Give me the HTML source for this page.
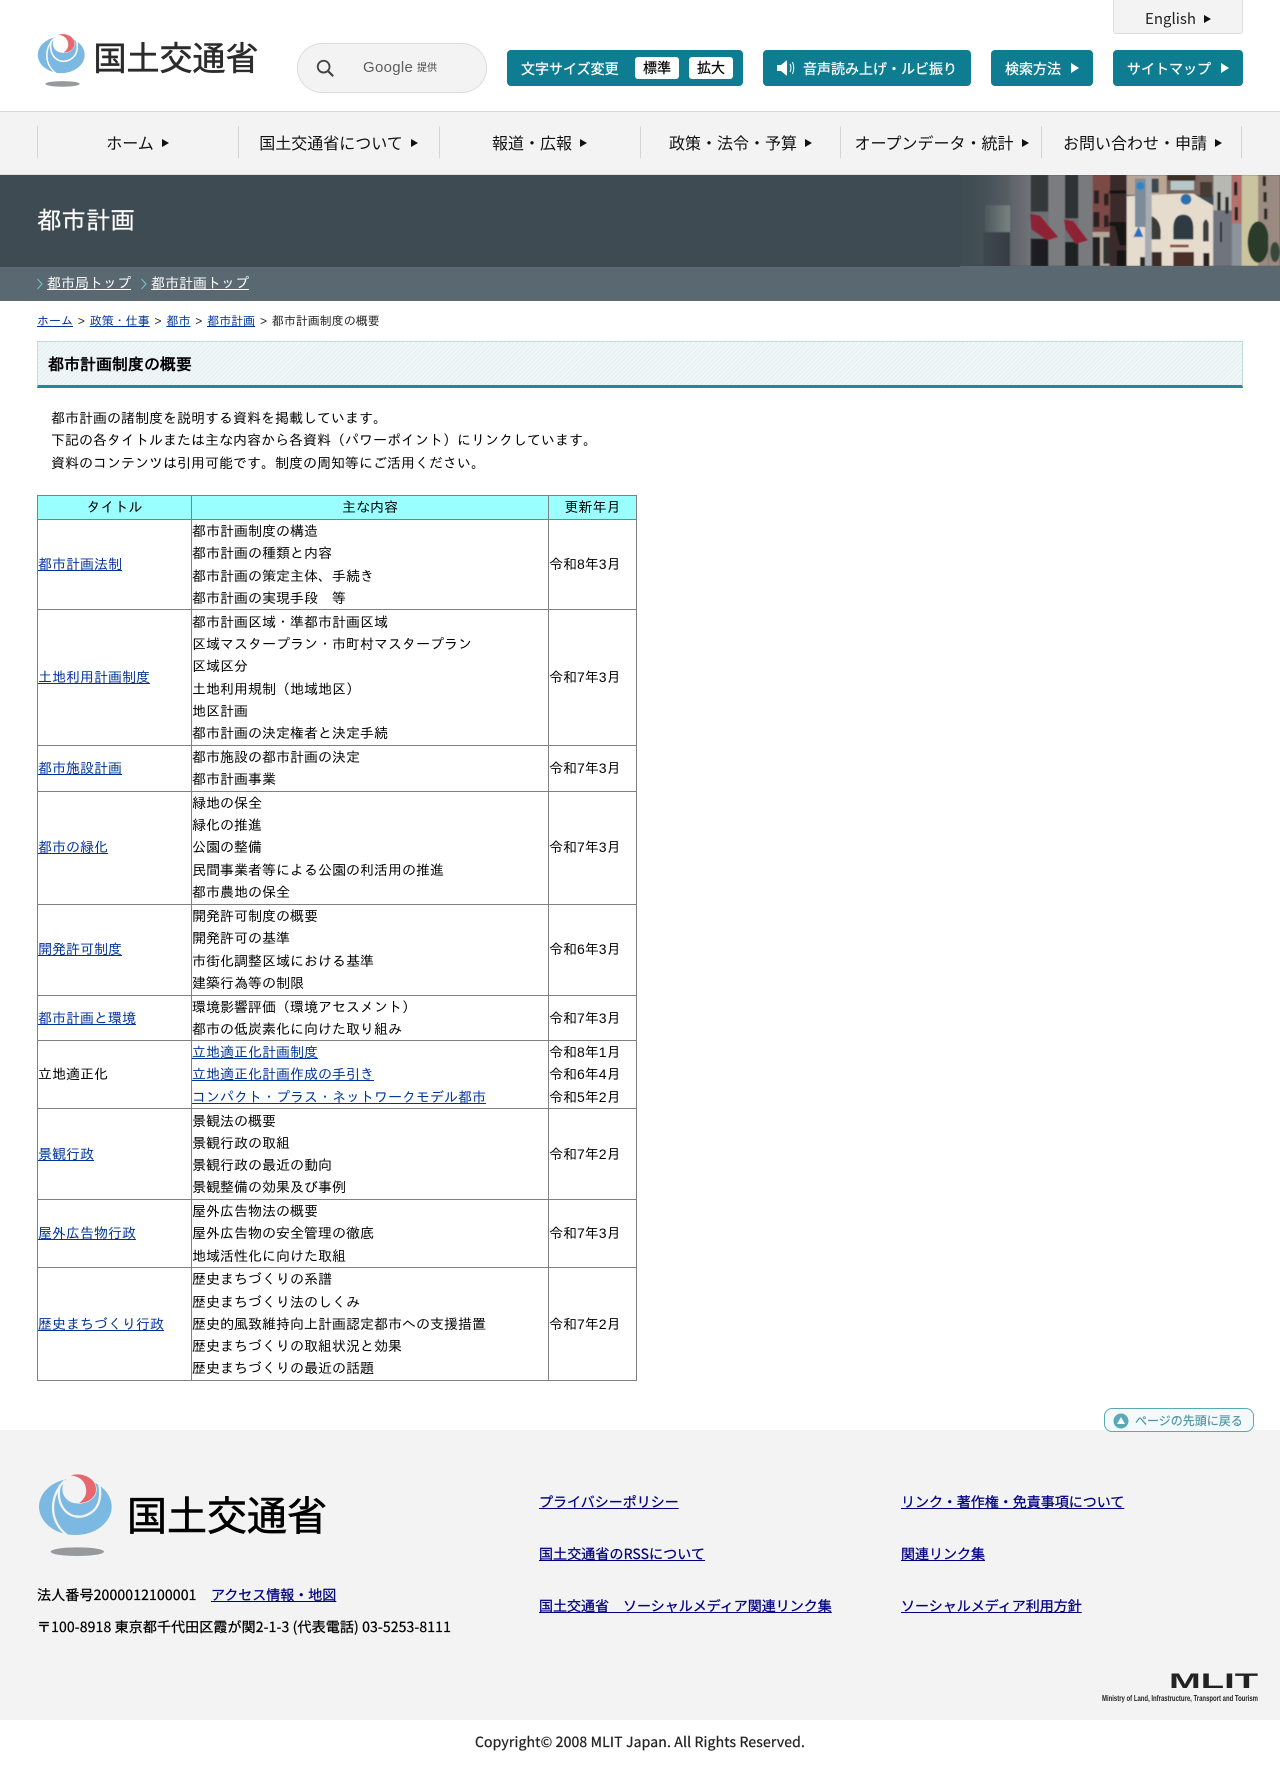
<!DOCTYPE html>
<html lang="ja"><head><meta charset="utf-8"><title>都市計画制度の概要</title>
<style>
*{box-sizing:border-box}
html,body{margin:0;padding:0;background:#fff}
body{width:1280px;height:1772px;position:relative;overflow:hidden;font-family:"Liberation Sans",IPAGothic,"Noto Sans CJK JP",sans-serif;font-size:14px;color:#000}
.a{position:absolute;white-space:nowrap}
.n{font-family:"Noto Sans CJK JP","Liberation Sans",sans-serif}
.btn{background:#0e7d92;border-radius:4px;top:50px;height:36px}
.bt{color:#fff;font-size:14px;line-height:36px;top:51px;-webkit-text-stroke:.25px #fff}
.tri{width:0;height:0;border-left:7px solid currentColor;border-top:4px solid transparent;border-bottom:4px solid transparent}
.sep{width:1px;background:#d4d4d4;top:126px;height:32px}
.ni{top:126px;height:32px;line-height:32px;font-size:16px;color:#111;text-align:center;width:201px}
.ni i{display:inline-block;width:0;height:0;border-left:7px solid #111;border-top:4px solid transparent;border-bottom:4px solid transparent;margin-left:8px;vertical-align:2px}
a{color:#003399;text-decoration:underline}
table{position:absolute;left:37px;top:495px;width:599px;border-collapse:collapse;table-layout:fixed;font-size:14px;line-height:22.25px}
td,th{border:1px solid #808080;padding:0;font-weight:normal;text-align:left;vertical-align:middle}
th{background:#99ffff;text-align:center}
.fl{font-size:14px;line-height:20px;-webkit-text-stroke:.25px currentColor;text-rendering:geometricPrecision}
.fl a{color:#000080}
.bc a{margin:0}
.bc b{font-weight:normal;margin:0 1.5px}
.sm{font-size:14px;line-height:22px;text-align:center;background:#fff;border-radius:3px;top:57px;width:44px;height:22px;-webkit-text-stroke:.2px #000}
</style></head><body>
<svg width="0" height="0" style="position:absolute"><defs>
<symbol id="em" viewBox="0 0 300 300">
<ellipse cx="136" cy="125" rx="109" ry="85" fill="#7bb8e2"/>
<circle cx="140" cy="72" r="43" fill="var(--b)"/>
<path d="M105,46C64,85 48,160 112,212" fill="none" stroke="var(--b)" stroke-width="7"/>
<path d="M90,60C72,125 125,178 180,145 205,130 216,100 208,58" fill="none" stroke="var(--b)" stroke-width="7"/>
<path d="M118,32C150,18 197,35 199,72 200,97 175,116 145,115 165,100 172,85 165,62 158,42 140,33 118,32Z" fill="#e8676e" stroke="var(--b)" stroke-width="2"/>
<ellipse cx="142" cy="260" rx="80" ry="13" fill="#98999c"/>
</symbol></defs></svg>

<!-- header -->
<svg class="a" style="left:32px;top:28px;--b:#fff" width="64.5" height="64.5"><use href="#em"/></svg>
<div class="a n" style="left:93.500px;top:32px;font-size:33px;line-height:48px;color:#2b2b2b;-webkit-text-stroke:.5px #2b2b2b">国土交通省</div>

<div class="a" style="left:297px;top:43px;width:190px;height:50px;border:1px solid #dcdcdc;border-radius:25px;background:#f3f3f3"></div>
<svg class="a" style="left:315px;top:58px" width="20" height="20" viewBox="0 0 22 22"><circle cx="9.5" cy="9.5" r="6.5" fill="none" stroke="#444" stroke-width="2"/><path d="M14,14L20,20" stroke="#444" stroke-width="2.4"/></svg>
<div class="a" style="left:363px;top:58px;font-size:15px;line-height:20px;color:#5c5c5c;letter-spacing:.3px">Google</div>
<div class="a n" style="left:417px;top:60px;font-size:10px;line-height:14px;color:#444">提供</div>

<div class="a" style="left:1113px;top:-1px;width:130px;height:35px;background:#f3f3f3;border:1px solid #ddd;border-radius:0 0 3px 3px"></div>
<div class="a n" style="left:1145px;top:8px;font-size:15px;line-height:22px;color:#222">English</div>
<div class="a tri" style="left:1204px;top:15px;color:#111"></div>

<div class="a btn" style="left:507px;width:236px"></div>
<div class="a n bt" style="left:521px">文字サイズ変更</div>
<div class="a n sm" style="left:635px">標準</div>
<div class="a n sm" style="left:689px">拡大</div>

<div class="a btn" style="left:763px;width:208px"></div>
<svg class="a" style="left:776px;top:59px" width="20" height="18" viewBox="0 0 20 18"><path d="M1,6H5L11,1V17L5,12H1Z" fill="#fff"/><path d="M14,5Q16,9 14,13M16.500,3Q19,9 16.500,15" fill="none" stroke="#fff" stroke-width="1"/></svg>
<div class="a n bt" style="left:803px;">音声読み上げ・ルビ振り</div>

<div class="a btn" style="left:991px;width:102px"></div>
<div class="a n bt" style="left:1005px">検索方法</div>
<div class="a tri" style="left:1071px;top:63px;color:#fff;border-left-width:8px;border-top-width:5px;border-bottom-width:5px"></div>

<div class="a btn" style="left:1113px;width:130px"></div>
<div class="a n bt" style="left:1127px">サイトマップ</div>
<div class="a tri" style="left:1221px;top:63px;color:#fff;border-left-width:8px;border-top-width:5px;border-bottom-width:5px"></div>

<!-- nav -->
<div class="a" style="left:0;top:111px;width:1280px;height:64px;background:#f3f3f3;border-top:1px solid #d8d8d8;border-bottom:1px solid #ddd"></div>
<div class="a sep" style="left:37px"></div><div class="a sep" style="left:238px"></div><div class="a sep" style="left:439px"></div><div class="a sep" style="left:640px"></div><div class="a sep" style="left:840px"></div><div class="a sep" style="left:1041px"></div><div class="a sep" style="left:1241px"></div>
<div class="a n ni" style="left:37px">ホーム<i></i></div>
<div class="a n ni" style="left:238px">国土交通省について<i></i></div>
<div class="a n ni" style="left:439px">報道・広報<i></i></div>
<div class="a n ni" style="left:640px">政策・法令・予算<i></i></div>
<div class="a n ni" style="left:841px">オープンデータ・統計<i></i></div>
<div class="a n ni" style="left:1042px">お問い合わせ・申請<i></i></div>

<!-- band -->
<div class="a" style="left:0;top:175px;width:1280px;height:92px;background:#3f4b52"></div>
<svg class="a" style="left:960px;top:172px;overflow:hidden" width="320" height="95" viewBox="0 0 960 285">
<defs><linearGradient id="g" x1="0" x2="1" y1="0" y2="0"><stop offset="0" stop-color="#3f4b52"/><stop offset=".3" stop-color="#3f4b52" stop-opacity=".9"/><stop offset="1" stop-color="#3f4b52" stop-opacity="0"/></linearGradient><filter id="bl"><feGaussianBlur stdDeviation="1.500"/></filter></defs>
<g filter="url(#bl)">
<rect x="0" y="9" width="400" height="273" fill="#6d7073"/>
<rect x="75" y="100" width="75" height="80" fill="#a9b0a5"/><rect x="70" y="180" width="80" height="102" fill="#2f3336"/>
<rect x="212" y="9" width="53" height="110" fill="#34373b"/><rect x="315" y="9" width="40" height="130" fill="#2d3034"/>
<rect x="205" y="200" width="65" height="82" fill="#1e1f22"/><rect x="310" y="210" width="52" height="72" fill="#1f2023"/>
<rect x="150" y="9" width="62" height="273" fill="#74777b"/><rect x="265" y="9" width="50" height="273" fill="#7a7c80"/><rect x="355" y="9" width="45" height="273" fill="#787a7e"/>
<path d="M210,125L240,131 295,195 262,205 214,172Z" fill="#8e2434"/><path d="M312,142L340,147 384,205 347,216 316,172Z" fill="#8e2434"/>
<rect x="398" y="9" width="102" height="273" fill="#7d4a45"/><rect x="398" y="180" width="50" height="102" fill="#b3a79c"/><rect x="398" y="195" width="22" height="87" fill="#222"/><rect x="430" y="195" width="20" height="80" fill="#333"/>
<rect x="402" y="55" width="15" height="40" fill="#2b2324"/><rect x="432" y="65" width="14" height="35" fill="#2b2324"/><rect x="400" y="120" width="18" height="45" fill="#2b2324"/><rect x="432" y="130" width="14" height="35" fill="#2b2324"/>
<rect x="450" y="9" width="50" height="273" fill="#3a2a2a"/><path d="M448,55H500V65H448ZM448,150H500V162H448ZM465,162H500V220H480ZM470,235H500V282H470Z" fill="#141416"/>
<rect x="500" y="9" width="122" height="60" fill="#b8a595"/><rect x="620" y="9" width="140" height="60" fill="#7a665c"/><rect x="632" y="27" width="70" height="27" fill="#b7c8c8"/><rect x="622" y="10" width="85" height="15" fill="#3a2d28"/>
<rect x="720" y="30" width="36" height="45" fill="#443a36"/>
<path d="M500,72L660,65 700,65 760,100V282H500Z" fill="#e6dccd"/>
<rect x="568" y="20" width="28" height="42" fill="#3d4a50"/>
<path d="M640,202V170Q640,128 670,128 700,128 700,170V202Z" fill="#2d3a42"/><path d="M574,202V132Q600,142 602,175V202Z" fill="#3a3a38"/><path d="M729,208V155Q738,130 746,155V208Z" fill="#3a3f42"/>
<circle cx="678" cy="82" r="16" fill="#2c6fae"/>
<rect x="630" y="218" width="56" height="8" fill="#8a4a3a"/><rect x="640" y="240" width="62" height="42" fill="#4a2f2a"/><rect x="575" y="240" width="30" height="42" fill="#3a2a26"/><rect x="540" y="255" width="16" height="27" fill="#2a2a2a"/><rect x="730" y="243" width="18" height="39" fill="#2a2422"/>
<rect x="555" y="9" width="20" height="273" fill="#a8acb0"/><rect x="525" y="20" width="32" height="145" fill="#7d8c98"/><circle cx="541" cy="42" r="12" fill="#2e86c8"/><path d="M536,163L550,195H520Z" fill="#2a6fc0"/>
<rect x="760" y="9" width="55" height="110" fill="#b8b8b2"/><rect x="760" y="115" width="55" height="167" fill="#70757d"/><rect x="772" y="60" width="10" height="55" fill="#2a2a2a"/><rect x="796" y="75" width="10" height="50" fill="#2a2a2a"/><rect x="780" y="150" width="6" height="60" fill="#2a2d33"/>
<rect x="815" y="9" width="30" height="150" fill="#b5706c"/><rect x="815" y="155" width="35" height="127" fill="#8d939b"/><rect x="822" y="30" width="10" height="40" fill="#2a2326"/><rect x="824" y="105" width="10" height="40" fill="#2a2326"/>
<rect x="845" y="9" width="50" height="273" fill="#cbc59f"/><rect x="895" y="9" width="65" height="273" fill="#9a8a80"/><rect x="908" y="12" width="10" height="30" fill="#2d2a28"/><rect x="910" y="60" width="10" height="30" fill="#2d2a28"/><rect x="912" y="110" width="10" height="32" fill="#2d2a28"/>
<ellipse cx="895" cy="210" rx="32" ry="62" fill="#2c3a2c"/><rect x="924" y="190" width="3" height="92" fill="#777"/><ellipse cx="945" cy="240" rx="14" ry="30" fill="#38463a"/>
</g>
<rect x="0" y="0" width="230" height="285" fill="url(#g)"/>
<rect x="0" y="282" width="960" height="3" fill="#5a6971"/>
<rect x="0" y="0" width="960" height="9" fill="#f3f3f3"/>
</svg>
<div class="a" style="left:37px;top:204px;font-size:24.5px;line-height:36px;color:#fff;-webkit-text-stroke:.2px #fff">都市計画</div>

<div class="a" style="left:0;top:267px;width:1280px;height:34px;background:#5a6971"></div>
<svg class="a" style="left:36px;top:278px" width="8" height="12" viewBox="0 0 8 12"><path d="M1.500,1L6,6 1.500,11" fill="none" stroke="#6fc6d0" stroke-width="1"/></svg>
<div class="a" style="left:47px;top:272px;line-height:22px"><a style="color:#fff">都市局トップ</a></div>
<svg class="a" style="left:140px;top:278px" width="8" height="12" viewBox="0 0 8 12"><path d="M1.500,1L6,6 1.500,11" fill="none" stroke="#6fc6d0" stroke-width="1"/></svg>
<div class="a" style="left:151px;top:272px;line-height:22px"><a style="color:#fff">都市計画トップ</a></div>

<!-- breadcrumb -->
<div class="a bc" style="left:37px;top:312px;font-size:12px;line-height:18px;color:#222"><a>ホーム</a> <b>&gt;</b> <a>政策・仕事</a> <b>&gt;</b> <a>都市</a> <b>&gt;</b> <a>都市計画</a> <b>&gt;</b> 都市計画制度の概要</div>

<!-- heading -->
<div class="a" style="left:37px;top:341px;width:1206px;height:47px;border:1px solid #c5dcdc;border-bottom:3px solid #1f8a9e;background:repeating-linear-gradient(135deg,#e6f1f2 0 1.500px,#f2f8f8 1.500px 3px)"></div>
<div class="a" style="left:48px;top:354px;font-size:16px;font-weight:bold;line-height:24px">都市計画制度の概要</div>

<div class="a" style="left:51px;top:407px;line-height:22.4px">都市計画の諸制度を説明する資料を掲載しています。<br>下記の各タイトルまたは主な内容から各資料（パワーポイント）にリンクしています。<br>資料のコンテンツは引用可能です。制度の周知等にご活用ください。</div>

<table>
<colgroup><col style="width:154px"><col style="width:357px"><col style="width:88px"></colgroup>
<tr style="height:24px"><th>タイトル</th><th>主な内容</th><th>更新年月</th></tr>
<tr style="height:90px"><td><a>都市計画法制</a></td><td>都市計画制度の構造<br>都市計画の種類と内容<br>都市計画の策定主体、手続き<br>都市計画の実現手段　等</td><td>令和8年3月</td></tr>
<tr style="height:136px"><td><a>土地利用計画制度</a></td><td>都市計画区域・準都市計画区域<br>区域マスタープラン・市町村マスタープラン<br>区域区分<br>土地利用規制（地域地区）<br>地区計画<br>都市計画の決定権者と決定手続</td><td>令和7年3月</td></tr>
<tr style="height:45px"><td><a>都市施設計画</a></td><td>都市施設の都市計画の決定<br>都市計画事業</td><td>令和7年3月</td></tr>
<tr style="height:113px"><td><a>都市の緑化</a></td><td>緑地の保全<br>緑化の推進<br>公園の整備<br>民間事業者等による公園の利活用の推進<br>都市農地の保全</td><td>令和7年3月</td></tr>
<tr style="height:91px"><td><a>開発許可制度</a></td><td>開発許可制度の概要<br>開発許可の基準<br>市街化調整区域における基準<br>建築行為等の制限</td><td>令和6年3月</td></tr>
<tr style="height:45px"><td><a>都市計画と環境</a></td><td>環境影響評価（環境アセスメント）<br>都市の低炭素化に向けた取り組み</td><td>令和7年3月</td></tr>
<tr style="height:68px"><td>立地適正化</td><td><a>立地適正化計画制度</a><br><a>立地適正化計画作成の手引き</a><br><a>コンパクト・プラス・ネットワークモデル都市</a></td><td>令和8年1月<br>令和6年4月<br>令和5年2月</td></tr>
<tr style="height:91px"><td><a>景観行政</a></td><td>景観法の概要<br>景観行政の取組<br>景観行政の最近の動向<br>景観整備の効果及び事例</td><td>令和7年2月</td></tr>
<tr style="height:68px"><td><a>屋外広告物行政</a></td><td>屋外広告物法の概要<br>屋外広告物の安全管理の徹底<br>地域活性化に向けた取組</td><td>令和7年3月</td></tr>
<tr style="height:113px"><td><a>歴史まちづくり行政</a></td><td>歴史まちづくりの系譜<br>歴史まちづくり法のしくみ<br>歴史的風致維持向上計画認定都市への支援措置<br>歴史まちづくりの取組状況と効果<br>歴史まちづくりの最近の話題</td><td>令和7年2月</td></tr>
</table>

<!-- footer -->
<div class="a" style="left:0;top:1430px;width:1280px;height:290px;background:#f3f3f3"></div>
<div class="a" style="left:1104px;top:1408px;width:150px;height:24px;background:#f4fafb;border:1.5px solid #5aa7b5;border-radius:8px"></div>
<svg class="a" style="left:1113px;top:1413px" width="16" height="16" viewBox="0 0 16 16"><circle cx="8" cy="8" r="7.500" fill="#5ba9b6"/><path d="M8,4L12,11H4Z" fill="#fff"/></svg>
<div class="a n" style="left:1135px;top:1412px;font-size:12px;line-height:18px;color:#4e93a3;-webkit-text-stroke:.15px #4e93a3">ページの先頭に戻る</div>

<svg class="a" style="left:30px;top:1465px;--b:#f3f3f3" width="100" height="100"><use href="#em"/></svg>
<div class="a n" style="left:127px;top:1484px;font-size:40px;line-height:58px;color:#000;-webkit-text-stroke:.6px #000">国土交通省</div>

<div class="a n fl" style="left:37px;top:1585px;letter-spacing:.15px">法人番号2000012100001</div>
<div class="a n fl" style="left:211px;top:1585px"><a>アクセス情報・地図</a></div>
<div class="a n fl" style="left:37px;top:1617px;letter-spacing:.12px">〒100-8918 東京都千代田区霞が関2-1-3 (代表電話) 03-5253-8111</div>

<div class="a n fl" style="left:539px;top:1492px"><a>プライバシーポリシー</a></div>
<div class="a n fl" style="left:539px;top:1544px;letter-spacing:.1px"><a>国土交通省のRSSについて</a></div>
<div class="a n fl" style="left:539px;top:1596px"><a>国土交通省　ソーシャルメディア関連リンク集</a></div>
<div class="a n fl" style="left:901px;top:1492px"><a>リンク・著作権・免責事項について</a></div>
<div class="a n fl" style="left:901px;top:1544px"><a>関連リンク集</a></div>
<div class="a n fl" style="left:901px;top:1596px"><a>ソーシャルメディア利用方針</a></div>

<svg class="a" style="left:1100px;top:1668px" width="160" height="36" viewBox="0 0 160 36">
<text x="69" y="20" font-family="Liberation Sans" font-weight="bold" font-size="21" textLength="89" lengthAdjust="spacingAndGlyphs" fill="#222">MLIT</text>
<text x="2" y="33" font-family="Liberation Sans" font-weight="bold" font-size="8" textLength="156" lengthAdjust="spacingAndGlyphs" fill="#222">Ministry of Land, Infrastructure, Transport and Tourism</text>
</svg>

<div class="a n fl" style="left:0;top:1732px;width:1280px;text-align:center;color:#222;letter-spacing:.15px">Copyright© 2008 MLIT Japan. All Rights Reserved.</div>
</body></html>
